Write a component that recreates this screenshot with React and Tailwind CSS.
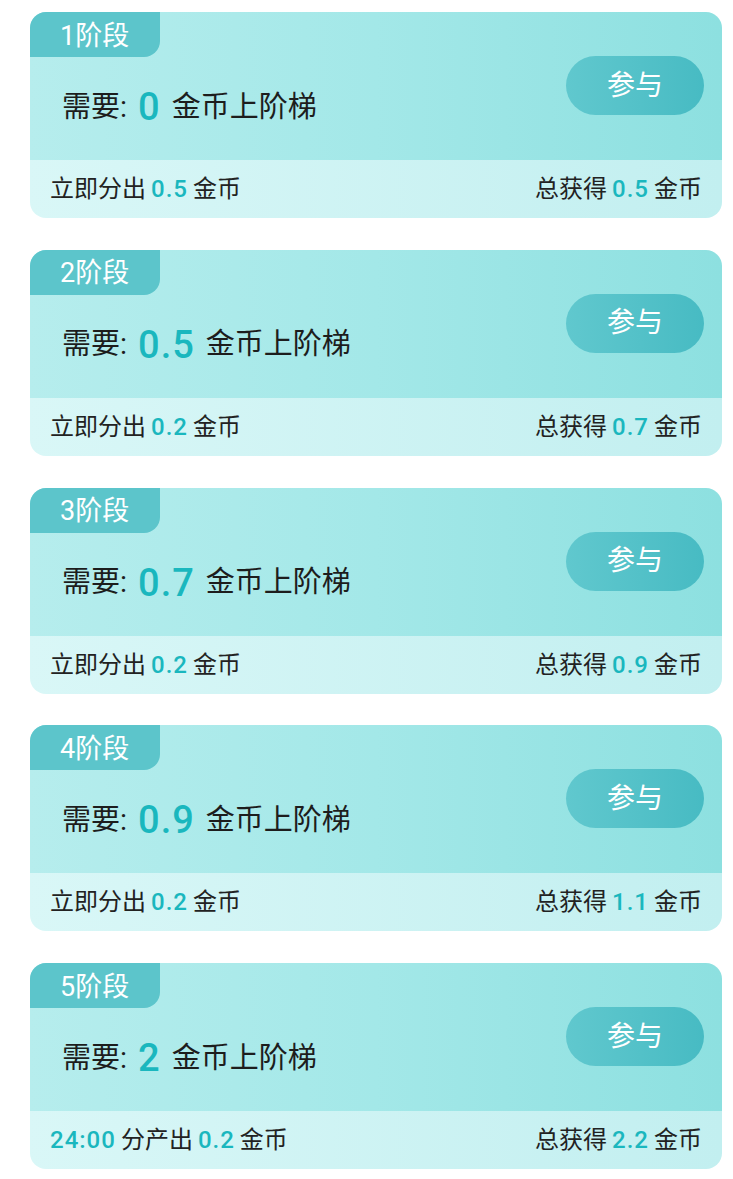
const stages = [
  { level: 1, need: "0", left: [{ t: "立即分出" }, { t: "0.5", hl: true }, { t: "金币" }], total: "0.5" },
  { level: 2, need: "0.5", left: [{ t: "立即分出" }, { t: "0.2", hl: true }, { t: "金币" }], total: "0.7" },
  { level: 3, need: "0.7", left: [{ t: "立即分出" }, { t: "0.2", hl: true }, { t: "金币" }], total: "0.9" },
  { level: 4, need: "0.9", left: [{ t: "立即分出" }, { t: "0.2", hl: true }, { t: "金币" }], total: "1.1" },
  { level: 5, need: "2", left: [{ t: "24:00", hl: true }, { t: "分产出" }, { t: "0.2", hl: true }, { t: "金币" }], total: "2.2" },
];

function StageCard({ stage }) {
  return (
    <div className="w-[692px] h-[206px] rounded-[16px] overflow-hidden flex flex-col">
      {/* TOP */}
      <div className="h-[148px] flex bg-gradient-to-r from-[#b6eded] via-[#a3e8e8] to-[#8de0e0]">
        <div className="flex-1 flex flex-col items-start">
          <div className="h-[45px] pl-[30px] pr-[31px] pt-[3px] flex items-center bg-[#5cc5cb] rounded-br-[16px] text-white text-[27px] leading-none">
            {stage.level}阶段
          </div>
          <div className="mt-[30px] ml-[32px] flex items-center h-[40px] text-[29px] text-[#1d1d1d] leading-none">
            <span>需要:</span>
            <span className="mx-[11px] text-[38px] font-medium tracking-[1px] text-[#1ab7be]">{stage.need}</span>
            <span>金币上阶梯</span>
          </div>
        </div>
        <div className="pt-[44px] pr-[18px]">
          <button className="w-[138px] h-[59px] rounded-full bg-gradient-to-r from-[#60c8ce] to-[#47bbc3] text-white text-[28px] leading-none">
            参与
          </button>
        </div>
      </div>
      {/* BOTTOM */}
      <div className="flex-1 flex items-center justify-between pl-[20px] pr-[20px] bg-gradient-to-r from-[#d9f7f7] to-[#c2eff0] text-[24px] text-[#222] leading-none">
        <div className="flex items-center gap-[5px]">
          {stage.left.map((p, i) => (
            <span key={i} className={p.hl ? "text-[#1ab7be] font-medium tracking-[1px]" : ""}>{p.t}</span>
          ))}
        </div>
        <div className="flex items-center gap-[5px]">
          <span>总获得</span>
          <span className="text-[#1ab7be] font-medium tracking-[1px]">{stage.total}</span>
          <span>金币</span>
        </div>
      </div>
    </div>
  );
}

export default function App() {
  return (
    <div className="w-[733px] min-h-[1179px] bg-white pt-[12px] pl-[30px] flex flex-col gap-[31.75px]" style={{ fontFamily: 'Roboto, "Noto Sans CJK SC", sans-serif' }}>
      {stages.map((s) => (
        <StageCard key={s.level} stage={s} />
      ))}
    </div>
  );
}
